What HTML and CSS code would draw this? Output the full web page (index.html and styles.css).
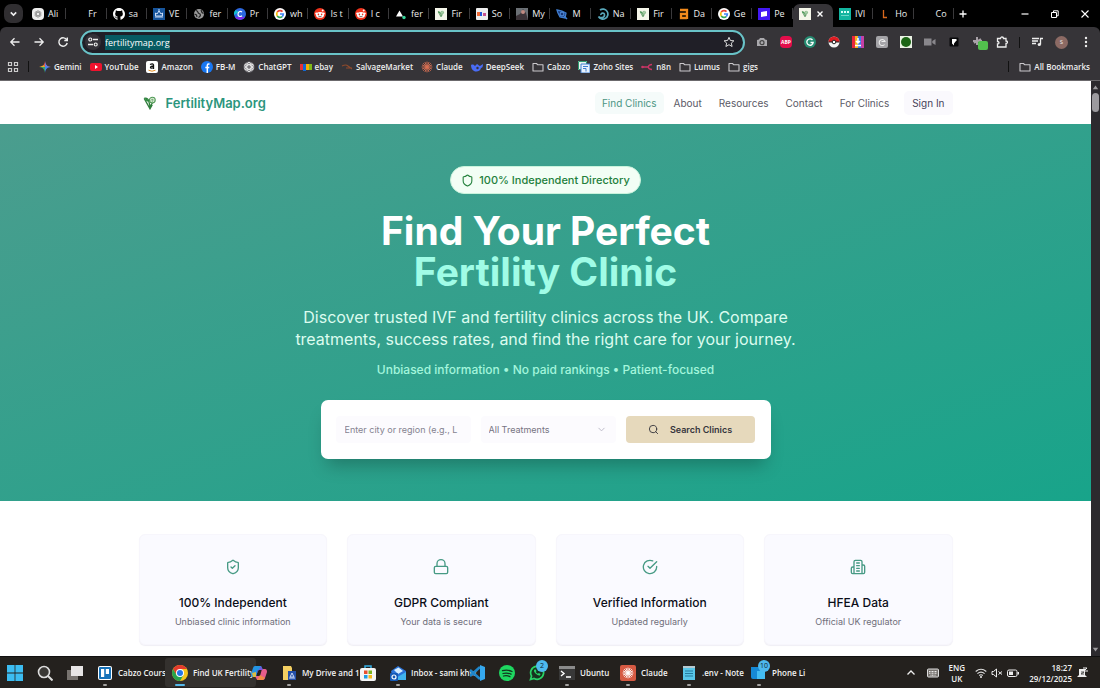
FILE: index.html
```
<!DOCTYPE html>
<html lang="en">
<head>
    <meta charset="UTF-8">
    <meta name="viewport" content="width=device-width, initial-scale=1.0">
    <title>FertilityMap.org</title>
    <link rel="stylesheet" href="styles.css">
</head>
<body>
    <svg class="defs" aria-hidden="true">
        <symbol id="folder" viewBox="0 0 12 12"><path d="M1 2.500h3.500l1.300 1.300H11v6.200H1z" fill="none" stroke="#c9c7cb" stroke-width="1.100" stroke-linejoin="round"/></symbol>
        <symbol id="leaf" viewBox="0 0 24 24"><path d="M2 4c4-1 7 1 8 5l2 9 8-12M2 4l10 18 4-7" fill="none" stroke="#2f7d3c" stroke-width="2.200"/><path d="M3 4c3 0 6 2 7 6C6 10 4 8 3 4z" fill="#2f8d40"/><circle cx="16" cy="7" r="5" fill="#dcebd5" stroke="#4f9a56" stroke-width="1.800"/><path d="M13 8l3-3 3 3M16 5v6" fill="none" stroke="#4f9a56"/></symbol>
        <symbol id="google" viewBox="0 0 12 12"><circle cx="6" cy="6" r="6" fill="#fff"/><g fill="none" stroke-width="1.700"><path d="M3.300 4A3.400 3.400 0 0 1 8.500 3.600" stroke="#ea4335"/><path d="M3.300 4a3.600 3.600 0 0 0 0 4" stroke="#fbbc05"/><path d="M3.300 8A3.400 3.400 0 0 0 8.200 8.600" stroke="#34a853"/><path d="M6 6h3.300c0 1-.4 2-1.100 2.600" stroke="#4285f4"/></g></symbol>
        <symbol id="reddit" viewBox="0 0 12 12"><circle cx="6" cy="6" r="6" fill="#f0321b"/><circle cx="8.700" cy="2.500" r="1" fill="#fff"/><circle cx="2.300" cy="5.600" r="1.100" fill="#fff"/><circle cx="9.700" cy="5.600" r="1.100" fill="#fff"/><ellipse cx="6" cy="6.900" rx="4" ry="2.900" fill="#fff"/><circle cx="4.400" cy="6.400" r=".8" fill="#f0321b"/><circle cx="7.600" cy="6.400" r=".8" fill="#f0321b"/><path d="M4.300 8.100q1.700 1 3.400 0" fill="none" stroke="#222" stroke-width=".6"/></symbol>
        <symbol id="gptmark" viewBox="0 0 12 12"><g fill="none" stroke="currentColor" stroke-width=".9"><ellipse cx="6" cy="6" rx="2.200" ry="4.600"/><ellipse cx="6" cy="6" rx="2.200" ry="4.600" transform="rotate(60 6 6)"/><ellipse cx="6" cy="6" rx="2.200" ry="4.600" transform="rotate(120 6 6)"/></g></symbol>
        <symbol id="burst" viewBox="0 0 12 12"><path d="M6 .6v10.800M.6 6h10.800M2.200 2.200l7.600 7.600M9.800 2.200L2.200 9.800M3.900 1l4.200 10M8.100 1L3.900 11M1 3.900l10 4.200M11 3.900L1 8.100" stroke="currentColor" stroke-width=".9"/></symbol>
    </svg>

    <div class="tabstrip">
        <button class="tab-search" aria-label="Search tabs"><svg viewBox="0 0 12 12"><path d="M3.500 5L6 7.500 8.500 5" fill="none" stroke="#eee" stroke-width="1.500"/></svg></button>
        <div class="tabs">
            <button class="tab"><svg class="ico" viewBox="0 0 12 12"><rect width="12" height="12" rx="4" fill="#eee"/><g color="#888"><use href="#gptmark" x="1.500" y="1.500" width="9" height="9"/></g></svg><span>Ali</span></button>
            <button class="tab"><i class="ico"></i><span>Fr</span></button>
            <button class="tab"><svg class="ico" viewBox="0 0 16 16"><path fill="#fff" d="M8 0C3.580 0 0 3.580 0 8c0 3.540 2.290 6.530 5.470 7.590.4.070.550-.17.550-.38v-1.490c-2.010.370-2.530-.490-2.690-.940-.090-.230-.480-.940-.820-1.130-.28-.15-.68-.52-.010-.53.630-.010 1.080.580 1.230.820.720 1.210 1.870.870 2.330.660.070-.52.280-.87.510-1.070-1.780-.2-3.640-.89-3.640-3.950 0-.87.310-1.590.820-2.150-.080-.2-.36-1.020.080-2.120 0 0 .670-.21 2.200.820a7.600 7.600 0 0 1 4 0c1.530-1.040 2.200-.82 2.200-.82.440 1.100.160 1.920.080 2.120.510.560.820 1.270.820 2.150 0 3.070-1.870 3.750-3.650 3.950.290.250.540.730.540 1.480v2.200c0 .210.150.460.550.380A8 8 0 0 0 16 8c0-4.420-3.580-8-8-8z"/></svg><span>sa</span></button>
            <button class="tab"><svg class="ico" viewBox="0 0 12 12"><rect width="12" height="12" fill="#17559c"/><path d="M2 9h8M2.500 8V5l1.500 1L6 3l2 3 1.500-1v3zM6 1v3" fill="none" stroke="#dceaff" stroke-width=".9"/></svg><span>VE</span></button>
            <button class="tab"><svg class="ico" viewBox="0 0 12 12"><circle cx="6" cy="6" r="5" fill="#999"/><path d="M3 2.500c3 .5 1 2.500 3 3s2 2.500-.5 4M8 2l1 2.500 1.500 1M1.500 6l2 1 .5 2" fill="none" stroke="#222" stroke-width="1.200"/></svg><span>fer</span></button>
            <button class="tab"><svg class="ico" viewBox="0 0 12 12"><circle cx="6" cy="6" r="6" fill="#2c68df"/><path d="M1 9A6 6 0 0 0 11 9z" fill="#7d2ae8"/><path d="M1.500 2A6 6 0 0 0 0 7l5-3z" fill="#13bfd0"/><path d="M8 4C6 2.500 4 4 4 6.200s2 3 4 1.500" fill="none" stroke="#fff" stroke-width="1.200"/></svg><span>Pr</span></button>
            <button class="tab"><svg class="ico"><use href="#google"/></svg><span>wh</span></button>
            <button class="tab"><svg class="ico"><use href="#reddit"/></svg><span>Is t</span></button>
            <button class="tab"><svg class="ico"><use href="#reddit"/></svg><span>I c</span></button>
            <button class="tab"><svg class="ico" viewBox="0 0 12 12"><path d="M4.500 2.500l3.500 6H1z" fill="#fff"/><circle cx="9" cy="9.500" r="1.700" fill="#35d399"/></svg><span>fer</span></button>
            <button class="tab"><svg class="ico" viewBox="0 0 12 12"><rect width="12" height="12" fill="#f5f6ea"/><use href="#leaf" x="2.500" y="2.500" width="7" height="7"/></svg><span>Fir</span></button>
            <button class="tab"><svg class="ico" viewBox="0 0 12 12"><rect width="12" height="12" rx="1" fill="#eee"/><path d="M1 4h3v4H1z" fill="#ef6b36"/><path d="M4 4h2v4H4z" fill="#2456d8"/><path d="M7 5h3v3H7z" fill="#c74f8e"/></svg><span>So</span></button>
            <button class="tab"><svg class="ico" viewBox="0 0 12 12"><rect width="12" height="12" fill="#6b7075"/><path d="M0 8l4-2 3-5 3 4 2 7H0z" fill="#3b3338"/><circle cx="7" cy="4" r="2" fill="#c28c83"/></svg><span>My</span></button>
            <button class="tab"><svg class="ico" viewBox="0 0 12 12"><path d="M1 2l5 1 4 2-1 5-5-1-2-4z" fill="#17377a" stroke="#3f7ed0" stroke-width="1.300"/><circle cx="6" cy="6" r="2" fill="none" stroke="#5b9be8"/><path d="M8 8l3 3" stroke="#3f7ed0" stroke-width="1.500"/></svg><span>M</span></button>
            <button class="tab"><svg class="ico" viewBox="0 0 12 12"><path d="M3 2a5 5 0 1 1-1.500 6.500c2 2 6 1.500 6-1.500S3.500 5 4 7" fill="none" stroke="#58a7b9" stroke-width="1.700"/></svg><span>Na</span></button>
            <button class="tab"><svg class="ico" viewBox="0 0 12 12"><rect width="12" height="12" fill="#f5f6ea"/><use href="#leaf" x="2.500" y="2.500" width="7" height="7"/></svg><span>Fir</span></button>
            <button class="tab"><svg class="ico" viewBox="0 0 12 12"><path d="M2 2h7v9M9 6H3v4h6" fill="none" stroke="#f28a1c" stroke-width="2.300"/></svg><span>Da</span></button>
            <button class="tab"><svg class="ico"><use href="#google"/></svg><span>Ge</span></button>
            <button class="tab"><svg class="ico" viewBox="0 0 12 12"><rect width="12" height="12" fill="#4318f5"/><path d="M3 4l6-1v5L3 9z" fill="#fff"/></svg><span>Pe</span></button>
            <button class="tab active"><svg class="ico" viewBox="0 0 12 12"><rect width="12" height="12" fill="#f5f6ea"/><use href="#leaf" x="2.500" y="2.500" width="7" height="7"/></svg><svg class="close" viewBox="0 0 10 10"><path d="M2.500 2.500l5 5M7.500 2.500l-5 5" stroke="#fff" stroke-width="1.400"/></svg></button>
            <button class="tab"><svg class="ico" viewBox="0 0 12 12"><rect width="12" height="12" fill="#12b5a0"/><path d="M2 4h2M5 4h2M8 4h2" stroke="#d6fff8" stroke-width="2"/><path d="M2 7.500h8" stroke="#6dd6c8"/></svg><span>IVI</span></button>
            <button class="tab"><svg class="ico" viewBox="0 0 12 12"><path d="M4.500 2v7.500H8" fill="none" stroke="#d8671c" stroke-width="1.300"/></svg><span>Ho</span></button>
            <button class="tab"><i class="ico"></i><span>Co</span></button>
        </div>
        <button class="newtab" aria-label="New tab"><svg viewBox="0 0 10 10"><path d="M5 1.500v7M1.500 5h7" stroke="#fff" stroke-width="1.300"/></svg></button>
        <div class="window-buttons">
            <button aria-label="Minimise"><svg viewBox="0 0 10 10"><path d="M1.500 5h7" stroke="#fff" stroke-width="1.200"/></svg></button>
            <button aria-label="Restore"><svg viewBox="0 0 10 10"><path d="M1.500 3.500h5v5h-5zM3.500 3V1.800h4.700v5H7" fill="none" stroke="#fff"/></svg></button>
            <button aria-label="Close"><svg viewBox="0 0 10 10"><path d="M1.500 1.500l7 7M8.500 1.500l-7 7" stroke="#fff" stroke-width="1.100"/></svg></button>
        </div>
    </div>

    <div class="toolbar">
        <div class="nav-buttons">
            <button aria-label="Back"><svg viewBox="0 0 12 12"><path d="M10.500 6H2M5.500 2.300L1.800 6l3.700 3.700" fill="none" stroke="#eee" stroke-width="1.300"/></svg></button>
            <button aria-label="Forward"><svg viewBox="0 0 12 12"><path d="M1.500 6H10M6.500 2.300L10.200 6 6.500 9.700" fill="none" stroke="#eee" stroke-width="1.300"/></svg></button>
            <button aria-label="Reload"><svg viewBox="0 0 12 12"><path d="M9.800 4A4.200 4.200 0 1 0 10.200 7M10.300 1.500v3H7.300" fill="none" stroke="#eee" stroke-width="1.400"/></svg></button>
        </div>
        <div class="omnibox">
            <button class="site-info" aria-label="Site information"><svg viewBox="0 0 12 12"><path d="M6 3.500h5M1 8.500h5" stroke="#eee" stroke-width="1.400"/><circle cx="3.300" cy="3.500" r="1.500" fill="none" stroke="#eee" stroke-width="1.200"/><circle cx="8.700" cy="8.500" r="1.500" fill="none" stroke="#eee" stroke-width="1.200"/></svg></button>
            <input type="text" value="fertilitymap.org" aria-label="Address" spellcheck="false">
            <button class="star" aria-label="Bookmark"><svg viewBox="0 0 12 12"><path d="M6 1.300l1.400 3.200 3.500.3-2.600 2.300.8 3.400L6 8.700l-3.100 1.800.8-3.400L1.100 4.800l3.500-.3z" fill="none" stroke="#ddd"/></svg></button>
        </div>
        <div class="extensions">
            <button aria-label="Screenshot"><svg viewBox="0 0 12 12"><path d="M1 4l2-.5L4 2h4l1 1.500 2 .5v6H1z" fill="#aaa9ad"/><circle cx="6" cy="6.700" r="2" fill="none" stroke="#444" stroke-width="1.200"/></svg></button>
            <button class="abp">ABP</button>
            <button aria-label="Grammar"><svg viewBox="0 0 12 12"><circle cx="6" cy="6" r="6" fill="#268c72"/><path d="M8.500 4A3.200 3.200 0 1 0 9.200 6.500H6.500" fill="none" stroke="#fff" stroke-width="1.300"/></svg></button>
            <button aria-label="Catcher"><svg viewBox="0 0 12 12"><circle cx="6" cy="6" r="5.500" fill="#f4f4f4"/><path d="M.5 6a5.500 5.500 0 0 1 11 0z" fill="#e01c22"/><path d="M.5 6h11" stroke="#222"/><circle cx="6" cy="6" r="1.800" fill="#fff" stroke="#222"/></svg></button>
            <button aria-label="Downloader"><svg viewBox="0 0 12 12"><path d="M0 0h3v12H0z" fill="#e9263c"/><path d="M3 0h3v12H3z" fill="#f3b321"/><path d="M6 0h3v12H6z" fill="#3d7be8"/><path d="M9 0h3v12H9z" fill="#c540a7"/><path d="M6 2v5M4 5l2 2 2-2M3 9.500h6" fill="none" stroke="#fff" stroke-width="1.500"/></svg></button>
            <button aria-label="Clipper"><svg viewBox="0 0 12 12"><rect width="12" height="12" rx="2" fill="#a5a4a8"/><path d="M8.500 8.500A3 3 0 1 1 9 5.500H5.500" fill="none" stroke="#eee" stroke-width="1.100"/></svg></button>
            <button aria-label="Recorder"><svg viewBox="0 0 12 12"><rect width="12" height="12" fill="#eaf3e4"/><circle cx="6" cy="6" r="5" fill="#1c6515"/></svg></button>
            <button aria-label="Camera"><svg viewBox="0 0 12 12"><path d="M0 2.500h7.500v7H0zM8.300 5L11.500 3v6L8.300 7z" fill="#89878c"/></svg></button>
            <button aria-label="Framer"><svg viewBox="0 0 12 12"><rect x="1.500" y="1.500" width="9" height="9" rx="1" fill="#08080a"/><path d="M4 3h4.500v2H4zM4 5h4L6 7.500v2L4 7.500z" fill="#fff"/></svg></button>
            <button class="sprite" aria-label="Helper"><svg viewBox="0 0 16 14"><path d="M1 5h9M5 1v8M2 7l7-4" stroke="#a8a1a8" stroke-width="2"/><rect x="6" y="5" width="10" height="9" rx="2" fill="#52c04d"/></svg></button>
            <button aria-label="Extensions"><svg viewBox="0 0 12 12"><path d="M1.500 2.500h3c0-2 3-2 3 0h2.500v2.500c2 0 2 2.500 0 2.500v3.500H1.500V8c2 0 2-2.500 0-2.500z" fill="none" stroke="#eee" stroke-width="1.300"/></svg></button>
        </div>
        <span class="divider"></span>
        <div class="extensions right-tools">
            <button aria-label="Media"><svg viewBox="0 0 12 12"><path d="M1 2.500h7M1 5h6M1 7.500h4" stroke="#eee" stroke-width="1.300"/><path d="M9.500 8.500V2.500H12" fill="none" stroke="#eee" stroke-width="1.300"/><circle cx="8.300" cy="8.500" r="1.600" fill="#eee"/></svg></button>
            <button class="avatar">S</button>
            <button aria-label="Menu"><svg viewBox="0 0 12 12"><g fill="#eee"><circle cx="6" cy="2" r="1.200"/><circle cx="6" cy="6" r="1.200"/><circle cx="6" cy="10" r="1.200"/></g></svg></button>
        </div>
    </div>

    <div class="bookmarks">
        <button class="apps" aria-label="Apps"><svg viewBox="0 0 12 12"><path d="M1.500 1.500h3v3h-3zM7.500 1.500h3v3h-3zM1.500 7.500h3v3h-3zM7.500 7.500h3v3h-3z" fill="none" stroke="#ccc" stroke-width="1.200"/></svg></button>
        <span class="divider"></span>
        <a href="#"><svg viewBox="0 0 12 12"><path d="M6 0c.5 4 2 5.500 6 6H0c4-.5 5.500-2 6-6z" fill="#e9574a"/><path d="M6 6V0c.5 4 2 5.500 6 6z" fill="#5f7fe8"/><path d="M6 12c.5-4 2-5.500 6-6H6z" fill="#4285f4"/><path d="M0 6h6v6c-.5-4-2-5.500-6-6z" fill="#38a867"/><path d="M0 6c2-.2 3.400-.8 4.300-1.700L6 6z" fill="#e4b02b"/></svg>Gemini</a>
        <a href="#"><svg viewBox="0 0 12 12"><rect y="2" width="12" height="8" rx="2" fill="#f0122d"/><path d="M5 4l3 2-3 2z" fill="#fff"/></svg>YouTube</a>
        <a href="#"><svg viewBox="0 0 12 12"><rect width="12" height="12" rx="2" fill="#fff"/><path d="M4 3.500q3-1.500 3.500.5v4M7.500 5C3 5 4 8.500 7.500 6.500" fill="none" stroke="#111" stroke-width="1.300"/><path d="M2.500 9.200q3.500 2 7 0" fill="none" stroke="#e58f25"/></svg>Amazon</a>
        <a href="#"><svg viewBox="0 0 12 12"><circle cx="6" cy="6" r="6" fill="#1877f2"/><path d="M8.500 3H7.500Q6.300 3 6.300 4.500V12M4.300 6.500h4" fill="none" stroke="#fff" stroke-width="1.500"/></svg>FB-M</a>
        <a href="#"><svg viewBox="0 0 12 12"><circle cx="6" cy="6" r="5.500" fill="#77757a"/><g color="#eee"><use href="#gptmark"/></g></svg>ChatGPT</a>
        <a href="#"><svg viewBox="0 0 12 12"><path d="M0 3h3v6H0z" fill="#e53238"/><path d="M3 3h3v7H3z" fill="#1268d3"/><path d="M6 3h3v6H6z" fill="#f5af02"/><path d="M9 3h3v6H9z" fill="#7fb918"/></svg>ebay</a>
        <a href="#"><svg viewBox="0 0 12 12"><path d="M1 5q4-2 6 0l4 3M5 7h6" fill="none" stroke="#8f4a2c" stroke-width="1.200"/></svg>SalvageMarket</a>
        <a href="#"><svg viewBox="0 0 12 12" color="#d96f52"><use href="#burst"/></svg>Claude</a>
        <a href="#"><svg viewBox="0 0 12 12"><path d="M0 4c2-1 3 0 4 1l2-2c2 1 2 2 3 2l3-2c0 3-1 4-2 4-1 4-5 4-7 3S0 7 0 4z" fill="#4a6cf5"/><circle cx="6.500" cy="7" r="1.200" fill="#363438"/></svg>DeepSeek</a>
        <a href="#"><svg><use href="#folder"/></svg>Cabzo</a>
        <a href="#"><svg viewBox="0 0 12 12"><path d="M0 0h9v9H0z" fill="#e9f5ee"/><path d="M.5.5h8v8h-8z" fill="none" stroke="#2d9a71"/><path d="M3 3h9v9H3z" fill="#e8f1fc" stroke="#3e7ed0"/><path d="M5 5.500h5M5 7.500h3v3" fill="none" stroke="#3e7ed0"/></svg>Zoho Sites</a>
        <a href="#"><svg viewBox="0 0 12 12"><path d="M1 6h6q1-2.500 4-2.500M7 6q1 2.500 4 2.500" fill="none" stroke="#cb3566" stroke-width="1.300"/><circle cx="1.500" cy="6" r="1.300" fill="#cb3566"/></svg>n8n</a>
        <a href="#"><svg><use href="#folder"/></svg>Lumus</a>
        <a href="#"><svg><use href="#folder"/></svg>gigs</a>
        <span class="divider push"></span>
        <a href="#"><svg><use href="#folder"/></svg>All Bookmarks</a>
    </div>

    <div class="viewport">
        <div class="page">
            <header>
                <div class="container">
                    <a class="logo" href="#"><svg><use href="#leaf"/></svg>FertilityMap.org</a>
                    <nav>
                        <a class="current" href="#">Find Clinics</a>
                        <a href="#">About</a>
                        <a href="#">Resources</a>
                        <a href="#">Contact</a>
                        <a href="#">For Clinics</a>
                        <a class="signin" href="#">Sign In</a>
                    </nav>
                </div>
            </header>

            <section class="hero">
                <div class="badge"><svg viewBox="0 0 24 24"><path d="M20 13c0 5-3.500 7.500-7.660 8.950a1 1 0 0 1-.67-.01C7.500 20.500 4 18 4 13V6a1 1 0 0 1 1-1c2 0 4.500-1.200 6.240-2.720a1.170 1.170 0 0 1 1.520 0C14.510 3.810 17 5 19 5a1 1 0 0 1 1 1z"/></svg>100% Independent Directory</div>
                <h1>Find Your Perfect <span>Fertility Clinic</span></h1>
                <p class="lead">Discover trusted IVF and fertility clinics across the UK. Compare treatments, success rates, and find the right care for your journey.</p>
                <p class="points">Unbiased information • No paid rankings • Patient-focused</p>
                <form class="search">
                    <input type="text" placeholder="Enter city or region (e.g., L" aria-label="City or region">
                    <div class="select">
                        <select aria-label="Treatment"><option>All Treatments</option></select>
                        <svg viewBox="0 0 24 24"><path d="m6 9 6 6 6-6"/></svg>
                    </div>
                    <button type="button"><svg viewBox="0 0 24 24"><circle cx="11" cy="11" r="8"/><path d="m21 21-4.300-4.300"/></svg>Search Clinics</button>
                </form>
            </section>

            <section class="features container">
                <div class="card">
                    <svg viewBox="0 0 24 24"><path d="M20 13c0 5-3.500 7.500-7.660 8.950a1 1 0 0 1-.67-.01C7.500 20.500 4 18 4 13V6a1 1 0 0 1 1-1c2 0 4.500-1.200 6.240-2.720a1.170 1.170 0 0 1 1.520 0C14.510 3.810 17 5 19 5a1 1 0 0 1 1 1z"/><path d="m9 12 2 2 4-4"/></svg>
                    <h3>100% Independent</h3>
                    <p>Unbiased clinic information</p>
                </div>
                <div class="card">
                    <svg viewBox="0 0 24 24"><rect x="2" y="11" width="20" height="11" rx="2"/><path d="M6 11V7a6 6 0 0 1 12 0v4"/></svg>
                    <h3>GDPR Compliant</h3>
                    <p>Your data is secure</p>
                </div>
                <div class="card">
                    <svg viewBox="0 0 24 24"><path d="M22 11.080V12a10 10 0 1 1-5.930-9.140"/><path d="m9 11 3 3L22 4"/></svg>
                    <h3>Verified Information</h3>
                    <p>Updated regularly</p>
                </div>
                <div class="card">
                    <svg viewBox="0 0 24 24"><path d="M6 22V4a2 2 0 0 1 2-2h8a2 2 0 0 1 2 2v18ZM6 12H4a2 2 0 0 0-2 2v6a2 2 0 0 0 2 2h2M18 9h2a2 2 0 0 1 2 2v9a2 2 0 0 1-2 2h-2M10 6h4M10 10h4M10 14h4M10 18h4"/></svg>
                    <h3>HFEA Data</h3>
                    <p>Official UK regulator</p>
                </div>
            </section>
        </div>
        <div class="scrollbar">
            <svg viewBox="0 0 9 8"><path d="M4.500 2L8 7H1z"/></svg>
            <div class="thumb"></div>
            <svg class="down" viewBox="0 0 9 8"><path d="M4.500 6L8 1H1z"/></svg>
        </div>
    </div>

    <div class="taskbar">
        <button class="task" aria-label="Start"><svg viewBox="0 0 16 16"><path d="M0 0h7.600v7.600H0zM8.400 0H16v7.600H8.400zM0 8.400h7.600V16H0zM8.400 8.400H16V16H8.400z" fill="#3cbdf2"/></svg></button>
        <button class="task" aria-label="Search"><svg viewBox="0 0 16 16"><circle cx="7" cy="7" r="5.500" fill="#3a3835" stroke="#ddd" stroke-width="1.600"/><path d="M11 11l4.500 4.500" stroke="#ddd" stroke-width="2"/></svg></button>
        <button class="task" aria-label="Task view"><svg viewBox="0 0 16 16"><path d="M0 5h11v10H0z" fill="#77736f"/><path d="M4 1h12v10H4z" fill="#e7e5e5"/></svg></button>
        <button class="task trello running"><svg viewBox="0 0 16 16"><rect x="1" y="1" width="14" height="14" rx="2" fill="#fff"/><rect x="2" y="2" width="12" height="12" rx="1" fill="#1672b9"/><path d="M4 4h3.200v8H4zM8.800 4H12v5H8.800z" fill="#fff"/></svg><span>Cabzo Course</span></button>
        <button class="task wide running current"><svg viewBox="0 0 16 16"><circle cx="8" cy="8" r="8" fill="#f6c51c"/><path d="M1.100 4A8 8 0 0 1 14.900 4H8l-3.500 6z" fill="#e33b2e"/><path d="M1.100 4A8 8 0 0 0 8 16l3.500-6H4.500z" fill="#27a34d"/><circle cx="8" cy="8" r="4" fill="#fff"/><circle cx="8" cy="8" r="3" fill="#2476e8"/></svg><span>Find UK Fertility</span></button>
        <button class="task" aria-label="Copilot"><svg viewBox="0 0 16 16"><path d="M4 1h6l2 4H7L5 12H2Q0 12 0 9l2-6q.5-2 2-2z" fill="#2494e3"/><path d="M12 15H6L4 11h5l2-7h3q2 0 2 3l-2 6q-.5 2-2 2z" fill="#e75d8b"/><path d="M10 1l2 4H7L5 10z" fill="#7454db"/><path d="M1 8l4-1v5H2z" fill="#dcbd40"/><path d="M6 15l3-5 5 3-2 2z" fill="#f18a45"/></svg></button>
        <button class="task wide running"><svg viewBox="0 0 16 16"><path d="M2 1h8l1 2v12H2z" fill="#f4cf62"/><path d="M7 6h8v9H7z" fill="#244fa8"/><path d="M9 12l2-4 2 4zM8 13h6" fill="none" stroke="#cbdaf7"/></svg><span>My Drive and 1 r</span></button>
        <button class="task" aria-label="Store"><svg viewBox="0 0 16 16"><path d="M5 4V1h6v3" fill="none" stroke="#35afe5" stroke-width="1.500"/><rect y="3" width="16" height="13" rx="2" fill="#f5f5f5"/><path d="M4 5.500h3.500V9H4z" fill="#e9502e"/><path d="M8.500 5.500H12V9H8.500z" fill="#7ab51f"/><path d="M4 10h3.500v3.500H4z" fill="#1f9ce5"/><path d="M8.500 10H12v3.500H8.500z" fill="#f5b81c"/></svg></button>
        <button class="task wide running"><svg viewBox="0 0 16 16"><path d="M1 6l7-5 8 5v8q0 1-1 1H3z" fill="#2a73d8"/><path d="M4 5l4.500-2.500L13 6 8 9z" fill="#d5edff"/><path d="M4 14l12-7v8H4z" fill="#40b4ee"/><rect y="8" width="8" height="8" rx="1" fill="#1459b5"/><circle cx="4" cy="12" r="2" fill="none" stroke="#fff" stroke-width="1.200"/></svg><span>Inbox - sami khw</span></button>
        <button class="task" aria-label="Code"><svg viewBox="0 0 16 16"><path d="M1 5l10 9M1 11L11 2" stroke="#1f86cb" stroke-width="2.500"/><path d="M11 0l5 2v12l-5 2z" fill="#35a8ee"/></svg></button>
        <button class="task" aria-label="Spotify"><svg viewBox="0 0 16 16"><circle cx="8" cy="8" r="8" fill="#1ed760"/><path d="M3.500 5.700q5-1.500 9.500.8M4 8.500q4-1.200 8 .7M4.500 11q3.500-1 6.500.7" fill="none" stroke="#12341e" stroke-width="1.300" stroke-linecap="round"/></svg></button>
        <button class="task" aria-label="WhatsApp"><svg viewBox="0 0 16 16"><path d="M1.500 14.500l1-3.500a6.500 6.500 0 1 1 2.600 2.500z" fill="#17341f" stroke="#29d366" stroke-width="1.700"/><path d="M5.500 4.500q-1.500 1.500 1 4t4.500 2l.5-1.500-1.600-1-1 .8Q7.300 8.200 6.800 7l.7-.8-.8-1.700z" fill="#29d366"/></svg><b class="count">2</b></button>
        <button class="task mid running"><svg viewBox="0 0 16 16"><path d="M0 1h16v14H0z" fill="#383838"/><path d="M0 1h16v3H0z" fill="#8b8b8b"/><path d="M2 6l3 2.500L2 11M7 12h5" fill="none" stroke="#fff" stroke-width="1.400"/></svg><span>Ubuntu</span></button>
        <button class="task mid running"><svg viewBox="0 0 16 16"><rect width="16" height="16" rx="2" fill="#d65a43"/><g color="#fff"><use href="#burst" x="2" y="2" width="12" height="12"/></g></svg><span>Claude</span></button>
        <button class="task note running"><svg viewBox="0 0 16 16"><path d="M2 1h12v14H2z" fill="#58c6e8"/><path d="M2 1h12v2H2z" fill="#b6c9d0"/><path d="M4 6h8M4 8.500h8M4 11h8" stroke="#247b9d"/></svg><span>.env - Note</span></button>
        <button class="task mid running"><svg viewBox="0 0 16 16"><path d="M0 2h11v12H2q-2 0-2-2z" fill="#1689d5"/><path d="M6 6h8v8H6z" fill="#43bcf2"/></svg><b class="count">10</b><span>Phone Li</span></button>

        <div class="tray">
            <svg viewBox="0 0 12 12"><path d="M2.500 7.500L6 4l3.500 3.500" fill="none" stroke="#eee" stroke-width="1.300"/></svg>
            <svg viewBox="0 0 12 12"><rect x=".5" y="2" width="11" height="8" rx="1" fill="#77736f" stroke="#ddd"/><path d="M2 4.500h8M2 6.200h8M3.500 8.200h5" stroke="#eee" stroke-dasharray="1 .5"/></svg>
            <div class="lang">ENG<br>UK</div>
            <div class="status">
                <svg viewBox="0 0 12 12"><path d="M.7 4.500q5.300-4.500 10.600 0M2.400 6.600q3.600-3 7.200 0M4.200 8.500q1.800-1.500 3.600 0" fill="none" stroke="#ddd" stroke-width="1.200"/><circle cx="6" cy="10" r="1" fill="#eee"/></svg>
                <svg viewBox="0 0 12 12"><path d="M1 4.500h1.500L5.500 2v8L2.500 7.500H1zM7.500 4.500l3.500 3M11 4.500l-3.500 3" fill="none" stroke="#eee"/></svg>
                <svg viewBox="0 0 12 12"><rect x=".5" y="3" width="9.500" height="6.500" rx="1.500" fill="none" stroke="#eee"/><path d="M2 4.500h4v3.500H2zM10.500 5H12v2.500h-1.500z" fill="#eee"/></svg>
            </div>
            <div class="clock">18:27<br>29/12/2025</div>
            <svg viewBox="0 0 12 12"><path d="M3 2h6v6l2 2H1l2-2z" fill="#eee"/><path d="M7 1h4L8 4h4" fill="none" stroke="#eee"/><path d="M5 5h3L5 7h3" fill="none" stroke="#333" stroke-width=".8"/></svg>
        </div>
    </div>
</body>
</html>
```
FILE: styles.css
```
* {
    box-sizing: border-box;
}

body {
    display: flex;
    flex-direction: column;
    height: 100vh;
    margin: 0;
    overflow: hidden;
    background: #000;
    color: #eee;
    font-family: "Open Sans", "Noto Sans", sans-serif;
    font-size: 9px;
}

button, input, select {
    font: inherit;
    color: inherit;
    background: none;
    border: 0;
    padding: 0;
    margin: 0;
    outline: none;
}

a {
    color: inherit;
    text-decoration: none;
}

svg {
    flex: none;
    display: block;
}

.defs {
    position: absolute;
    width: 0;
    height: 0;
}

/* browser tabs */
.tabstrip {
    display: flex;
    align-items: center;
    flex: none;
    height: 27px;
    padding-left: 4px;
}

.tab-search {
    width: 19px;
    height: 19px;
    padding: 3px;
    border-radius: 7px;
    background: #302e31;
}

.tabs {
    display: flex;
    flex: 0 1 928px;
    min-width: 0;
    margin-left: 3px;
    align-self: stretch;
}

.tab {
    display: flex;
    align-items: center;
    flex: 1 1 0;
    min-width: 0;
    gap: 4px;
    padding-left: 6px;
    position: relative;
    white-space: nowrap;
}

.tab::after {
    content: "";
    position: absolute;
    right: 0;
    top: 8px;
    width: 1px;
    height: 11px;
    background: #3a393b;
}

.ico {
    flex: none;
    width: 12px;
    height: 12px;
}

.tab.active {
    align-self: flex-end;
    height: 23px;
    padding-bottom: 4px;
    border-radius: 7px 7px 0 0;
    background: #363438;
}

.tab.active::after {
    display: none;
}

.close {
    width: 10px;
    height: 10px;
}

.newtab {
    width: 10px;
    height: 10px;
    margin-left: 4px;
}

.window-buttons {
    display: flex;
    gap: 20px;
    margin-left: auto;
    padding-right: 10px;
}

.window-buttons button {
    width: 10px;
    height: 10px;
}

/* address bar */
.toolbar {
    display: flex;
    align-items: center;
    flex: none;
    height: 30px;
    padding: 0 8px 0 9px;
    background: #363438;
    border-radius: 6px 6px 0 0;
}

.nav-buttons {
    display: flex;
    gap: 12px;
    margin-right: 11px;
}

.nav-buttons svg,
.extensions svg {
    width: 12px;
    height: 12px;
}

.omnibox {
    display: flex;
    align-items: center;
    flex: 1;
    height: 25px;
    padding: 0 8px 0 3px;
    border: 2px solid #69c3c8;
    border-radius: 13px;
    background: #201f27;
}

.site-info {
    width: 16px;
    height: 16px;
    padding: 2px;
    border-radius: 50%;
    background: #343239;
}

.omnibox input {
    field-sizing: content;
    margin-left: 4px;
    height: 15px;
    background: #075b62;
    color: #fff;
    font-weight: 500;
}

.star {
    width: 12px;
    height: 12px;
    margin-left: auto;
}

.extensions {
    display: flex;
    align-items: center;
    gap: 12px;
    margin-left: 11px;
}

.extensions button {
    width: 12px;
    height: 12px;
}

.extensions .abp {
    border-radius: 4px;
    background: #e40d4b;
    color: #fff;
    font-size: 5px;
    font-weight: 700;
}

.extensions .sprite svg {
    width: 16px;
    height: 14px;
}

.extensions .avatar {
    width: 13px;
    height: 13px;
    border-radius: 50%;
    background: #8c6a64;
    font-size: 6px;
}

.divider {
    width: 1px;
    height: 11px;
    margin-left: 11px;
    background: #111;
}

/* bookmarks bar */
.bookmarks {
    display: flex;
    align-items: center;
    flex: none;
    height: 24px;
    padding: 0 10px 4px 7px;
    background: #363438;
    border-bottom: 1px solid #6b696c;
    font-size: 8px;
    font-weight: 600;
    white-space: nowrap;
}

.bookmarks svg {
    width: 12px;
    height: 12px;
}

.bookmarks .divider {
    margin-left: 9px;
}

.bookmarks .push {
    margin-left: auto;
}

.bookmarks a {
    display: flex;
    align-items: center;
    gap: 3px;
    margin-left: 8px;
}

.bookmarks .divider + a {
    margin-left: 10px;
}

/* web page */
.viewport {
    display: flex;
    flex: 1;
    min-height: 0;
    background: #fff;
}

.page {
    flex: 1;
    min-width: 0;
    overflow: hidden;
    color: #0b0d17;
    font-family: Inter, sans-serif;
    font-size: 10px;
}

.container {
    width: 100%;
    max-width: 814px;
    margin: 0 auto;
}

header .container {
    display: flex;
    align-items: center;
    justify-content: space-between;
    height: 43px;
}

.logo {
    display: flex;
    align-items: center;
    gap: 9px;
    padding-left: 4px;
    color: #2b957d;
    font-size: 13px;
    font-weight: 600;
}

.logo svg {
    width: 14px;
    height: 14px;
}

nav {
    display: flex;
    align-items: center;
    gap: 3px;
    color: #5b5a66;
}

nav a {
    padding: 5px 7px;
    border-radius: 5px;
}

nav .current {
    background: #f5fbfa;
    color: #4b9583;
}

nav .signin {
    margin-left: 5px;
    padding: 6px 8px;
    background: #faf9fd;
    color: #474359;
}

.hero {
    display: flex;
    flex-direction: column;
    align-items: center;
    padding: 42px 20px;
    background: linear-gradient(to bottom right, #4b9d8e, #18a48a);
    text-align: center;
}

.badge {
    display: flex;
    align-items: center;
    gap: 5px;
    height: 28px;
    padding: 0 10px;
    border: 1px solid #c9f3dc;
    border-radius: 14px;
    background: #f2fef5;
    color: #23803c;
    font-size: 11px;
    font-weight: 500;
}

.badge svg {
    width: 13px;
    height: 13px;
}

.badge svg,
.search svg,
.card svg {
    fill: none;
    stroke: currentColor;
    stroke-width: 2;
    stroke-linecap: round;
    stroke-linejoin: round;
}

.hero h1 {
    margin: 16px 0 0;
    color: #fff;
    font-size: 39px;
    font-weight: 700;
    line-height: 41px;
}

.hero h1 span {
    display: block;
    color: #a0fce6;
}

.lead {
    max-width: 540px;
    margin: 14px 0 0;
    color: #dcfcef;
    font-size: 16px;
    line-height: 22px;
}

.points {
    margin: 12px 0 0;
    color: #a4f6dc;
    font-size: 12px;
    font-weight: 500;
    line-height: 16px;
}

.search {
    display: grid;
    grid-template-columns: 1fr 1fr 129px;
    gap: 10px;
    width: 100%;
    max-width: 450px;
    margin-top: 22px;
    padding: 16px 16px 16px 15px;
    border-radius: 7px;
    background: #fff;
    box-shadow: 0 12px 18px -6px rgba(0, 0, 0, .25);
    color: #777482;
    font-size: 9px;
}

.search > * {
    min-width: 0;
    height: 27px;
    border-radius: 4px;
}

.search input,
.select {
    background: #fcfbfe;
}

.search input {
    padding: 0 9px;
}

.search input::placeholder {
    color: #858390;
}

.select {
    position: relative;
}

.select select {
    width: 100%;
    height: 100%;
    padding: 0 8px;
    appearance: none;
}

.select svg {
    position: absolute;
    right: 9px;
    top: 8px;
    width: 11px;
    height: 11px;
    color: #b9b7c5;
    pointer-events: none;
}

.search button {
    display: flex;
    align-items: center;
    justify-content: center;
    gap: 11px;
    background: #e6d9bc;
    color: #36363c;
    font-weight: 600;
}

.search button svg {
    width: 11px;
    height: 11px;
}

.features {
    display: grid;
    grid-template-columns: repeat(4, 1fr);
    gap: 20px;
    padding-top: 33px;
}

.card {
    display: flex;
    flex-direction: column;
    align-items: center;
    height: 111px;
    padding-top: 24px;
    border: 1px solid #f7f6fc;
    border-radius: 6px;
    background: #fafaff;
    box-shadow: 0 1px 1px #f0eff5;
    text-align: center;
}

.card svg {
    width: 16px;
    height: 16px;
    color: #469a84;
}

.card h3 {
    margin: 20px 0 0;
    font-size: 12px;
    font-weight: 500;
    line-height: 16px;
}

.card p {
    margin: 4px 0 0;
    color: #6f6e7a;
    font-size: 9px;
    line-height: 14px;
}

.scrollbar {
    display: flex;
    flex-direction: column;
    flex: none;
    width: 9px;
    padding: 2px 1px;
    background: #2c2a2e;
}

.scrollbar svg {
    width: 7px;
    height: 8px;
    fill: #9c9a9e;
}

.thumb {
    height: 19px;
    margin-top: 2px;
    border-radius: 4px;
    background: #9c9a9e;
}

.scrollbar .down {
    margin-top: auto;
}

/* windows taskbar */
.taskbar {
    display: flex;
    flex: none;
    height: 32px;
    background: #24211e;
    border-top: 1px solid #111;
    color: #f2f2f2;
    font-size: 8px;
    font-weight: 600;
    white-space: nowrap;
}

.task {
    display: flex;
    align-items: center;
    flex: none;
    gap: 5px;
    width: 30px;
    padding-left: 7px;
    position: relative;
}

.task svg {
    width: 16px;
    height: 16px;
}

.task.trello {
    width: 75px;
}

.task.wide {
    width: 79px;
}

.task.mid {
    width: 61px;
}

.task.note {
    width: 70px;
}

.task.current {
    z-index: 0;
}

.task.current::before {
    content: "";
    position: absolute;
    inset: 1px -12px 1px 0;
    z-index: -1;
    border-radius: 3px;
    background: #34312e;
}

.task.running::after {
    content: "";
    position: absolute;
    left: 13px;
    bottom: 2px;
    width: 4px;
    height: 2px;
    border-radius: 1px;
    background: #a5a3a1;
}

.task.current::after {
    left: 10px;
    width: 10px;
    background: #55b9ea;
}

.count {
    position: absolute;
    left: 14px;
    top: 3px;
    width: 12px;
    height: 12px;
    border-radius: 50%;
    background: #4db9ee;
    color: #123;
    font-size: 7px;
    font-weight: 400;
    line-height: 12px;
}

.tray {
    display: flex;
    align-items: center;
    gap: 10px;
    margin-left: auto;
    padding-right: 12px;
    line-height: 11px;
}

.tray svg {
    width: 12px;
    height: 12px;
}

.lang {
    text-align: center;
}

.status {
    display: flex;
    gap: 4px;
}

.clock {
    text-align: right;
}

.clock + svg {
    margin-left: -6px;
}
```
